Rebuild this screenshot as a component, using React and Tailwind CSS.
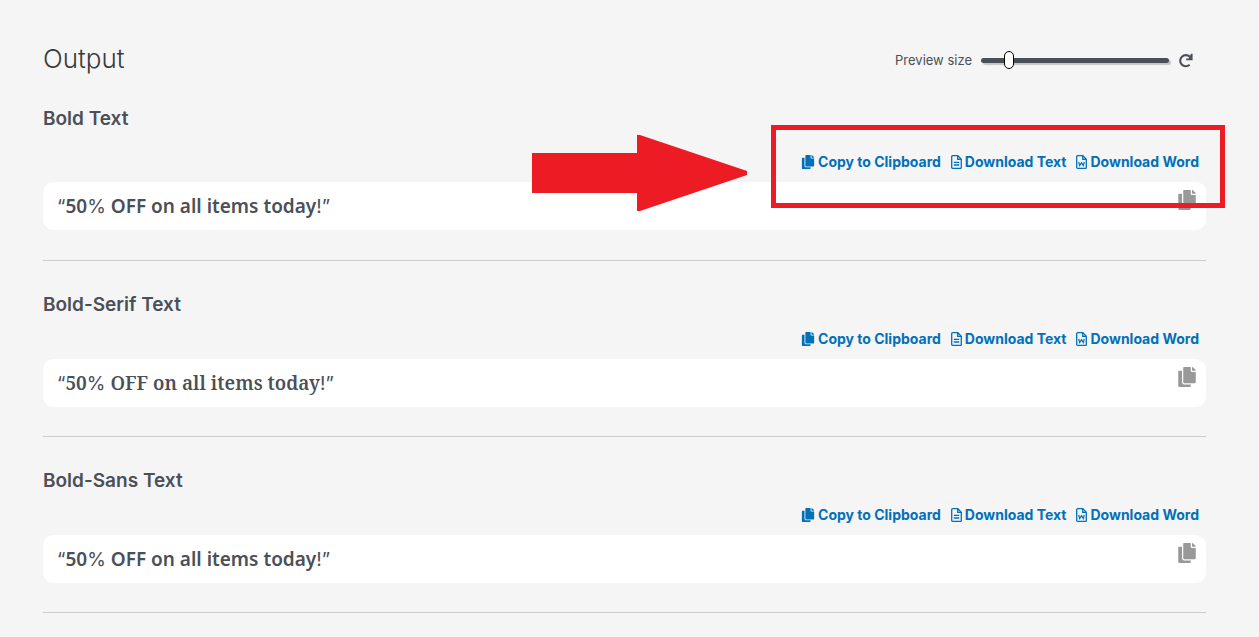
import React, { useState } from 'react';
import { FaCopy } from 'react-icons/fa';

const DEFAULT_SIZE = 13;

const OUTPUTS = [
  { id: 'bold', title: 'Bold Text', font: 'font-["Noto_Sans",sans-serif] font-semibold' },
  { id: 'bold-serif', title: 'Bold-Serif Text', font: 'font-["Noto_Serif","DejaVu_Serif",serif] font-semibold' },
  { id: 'bold-sans', title: 'Bold-Sans Text', font: 'font-["Noto_Sans",sans-serif] font-semibold' },
];

const FileIcon = ({ className, children }) => (
  <svg className={className} viewBox="0 0 11 14" fill="none" stroke="currentColor" strokeWidth="1.3">
    <path d="M1.6.7h5.2l3.5 3.5v8.2a.9.9 0 0 1-.9.9H1.6a.9.9 0 0 1-.9-.9V1.6a.9.9 0 0 1 .9-.9z" />
    <path d="M6.7.9v3.5h3.4" />
    {children}
  </svg>
);

const TextFileIcon = ({ className }) => (
  <FileIcon className={className}>
    <path d="M2.8 7.4h5.4M2.8 10h5.4" />
  </FileIcon>
);

const WordFileIcon = ({ className }) => (
  <FileIcon className={className}>
    <path d="M2.7 7l1 3.6L5.5 7.6l1.8 3 1-3.6" strokeWidth="1.2" />
  </FileIcon>
);

const ResetIcon = ({ className }) => (
  <svg className={className} viewBox="0 0 15 15">
    <path d="M11.8 3.8A5.6 5.6 0 1 0 11.6 11.8" fill="none" stroke="currentColor" strokeWidth="2.1" />
    <path d="M14.6.8v6.4H8.2V5.4h2.4L13 .8z" fill="currentColor" />
  </svg>
);

const ActionLink = ({ icon: Icon, children }) => (
  <a href="#" className="flex items-center gap-[3px] hover:underline">
    <Icon className="h-[14px] w-auto" />
    {children}
  </a>
);

// Only letters and digits take the bold style, punctuation stays plain
const StyledText = ({ font }) => (
  <p className="text-[19px] leading-[28px]">
    “<span className={font}>50</span>%<span className={font}> OFF on all items today</span>!”
  </p>
);

const OutputSection = ({ title, font, first }) => (
  <section className={`border-b border-[#cccccc] ${first ? 'pb-[30px]' : 'pt-[30px] pb-[29px]'}`}>
    <h2 className={`text-[19px] leading-[28px] font-semibold ${first ? 'mb-[19px]' : 'mb-[10px]'}`}>{title}</h2>
    <div className="mb-[10px] flex justify-end gap-[10px] pr-[7px] text-[14px] leading-[20px] font-bold text-[#0170b9]">
      <ActionLink icon={FaCopy}>Copy to Clipboard</ActionLink>
      <ActionLink icon={TextFileIcon}>Download Text</ActionLink>
      <ActionLink icon={WordFileIcon}>Download Word</ActionLink>
    </div>
    <div className="flex h-[48px] items-center justify-between rounded-[10px] bg-white pr-[9px] pl-[14px]">
      <StyledText font={font} />
      <button type="button" aria-label={`Copy ${title}`} className="mt-[8px] self-start text-[#999999]">
        <FaCopy className="h-[20px] w-auto" />
      </button>
    </div>
  </section>
);

const App = () => {
  const [size, setSize] = useState(DEFAULT_SIZE);

  return (
    <main className='relative min-h-screen bg-[#f5f5f5] pt-[42px] pr-[53px] pb-6 pl-[43px] font-["Inter",sans-serif] text-[#4b4f58]'>
      <header className="mb-[29px] flex items-center justify-between pr-[13px]">
        <h1 className="text-[26px] leading-[34px] font-light text-[#3a3a3a]">Output</h1>
        <div className="flex items-center gap-[9px] pt-[2px]">
          <label htmlFor="preview-size" className="text-[13px] leading-[20px]">Preview size</label>
          <input
            id="preview-size"
            type="range"
            min="0"
            max="100"
            value={size}
            onChange={e => setSize(Number(e.target.value))}
            className="h-[5px] w-[188px] appearance-none rounded-full bg-[#4b4f58] shadow-[2px_2px_1px_#c4c4c4] [&::-webkit-slider-thumb]:h-[18px] [&::-webkit-slider-thumb]:w-[10px] [&::-webkit-slider-thumb]:appearance-none [&::-webkit-slider-thumb]:rounded-[5px] [&::-webkit-slider-thumb]:border [&::-webkit-slider-thumb]:border-black [&::-webkit-slider-thumb]:bg-white"
          />
          <button type="button" aria-label="Reset preview size" onClick={() => setSize(DEFAULT_SIZE)}>
            <ResetIcon className="h-[15px] w-auto" />
          </button>
        </div>
      </header>

      {OUTPUTS.map((o, i) => (
        <OutputSection key={o.id} title={o.title} font={o.font} first={i === 0} />
      ))}

      {/* Callout over the download links */}
      <div className="pointer-events-none absolute top-[125px] right-[34px] flex items-start gap-[24px]">
        <svg className="mt-[10px] h-[76px] w-[215px]" viewBox="0 0 215 76" fill="#ed1c24">
          <path d="M0 18h105V0h3l107 36v4L108 76h-3V58H0z" />
        </svg>
        <div className="h-[83px] w-[454px] border-[5px] border-[#ed1c24]" />
      </div>
    </main>
  );
};

export default App;
